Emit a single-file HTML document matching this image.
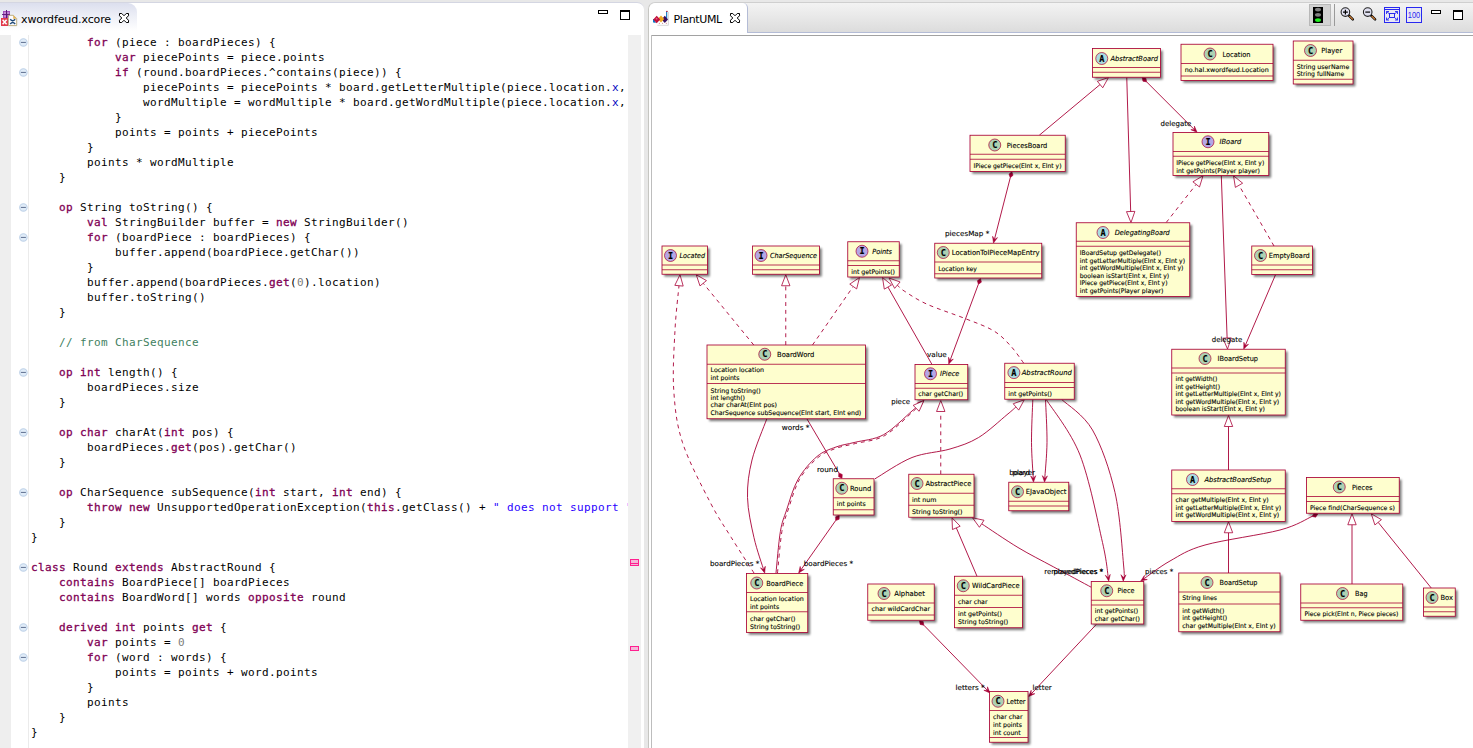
<!DOCTYPE html>
<html><head><meta charset="utf-8"><title>xwordfeud.xcore - PlantUML</title>
<style>
html,body{margin:0;padding:0}
body{width:1473px;height:748px;overflow:hidden;background:#e8e8e8;position:relative;font-family:"DejaVu Sans","Liberation Sans",sans-serif}
.abs{position:absolute}
#lp{left:0;top:2px;width:644px;height:746px;background:#fff;border-top:1px solid #d4d6e2;border-top-right-radius:7px;box-sizing:border-box;overflow:hidden}
#ltab{left:0;top:0;width:137px;height:31px;background:linear-gradient(#dcdfee 0%,#eceef6 40%,#fff 90%);border-top-right-radius:9px}
.tt{font-size:11px;color:#000;white-space:nowrap;line-height:14px}
#lruler{left:0;top:32px;width:11px;height:720px;background:#eeeeee}
#lline{left:28px;top:32px;width:1px;height:720px;background:#ebebeb}
#code{left:31px;top:31px;width:597px;height:720px;overflow:hidden;font-family:"DejaVu Sans Mono","Liberation Mono",monospace;font-size:11px;letter-spacing:0.378px;color:#000}
.ln{height:15px;line-height:15px;white-space:pre}
.k{color:#7f0055;-webkit-text-stroke:0.3px #7f0055}
.f{color:#0000c0}.s{color:#2a00ff}.c{color:#3f7f5f}.z{color:#7d7d7d}
.fm{position:absolute;left:19px;width:7px;height:7px;border:1px solid #b4c4d8;border-radius:50%;background:#f4f8fc;box-sizing:content-box}
.fm:after{content:"";position:absolute;left:1.5px;top:3px;width:4px;height:1px;background:#7890b0}
#oruler{left:628px;top:32px;width:13px;height:720px;background:#f0f0f0}
.pm{position:absolute;left:2px;width:7px;border:1px solid #ff2090;background:#f4b8d8}
.ico-min{width:8px;height:2px;border:1px solid #000;background:#fff}
.ico-max{width:8px;height:7px;border:1px solid #000;border-top-width:2px;background:#fff}
#rp{left:648px;top:2px;width:840px;height:746px;background:#fff;border-top:1px solid #cfcfcf;border-left:1px solid #c6c6c2;box-sizing:border-box;border-top-left-radius:7px;overflow:hidden}
#rbar{left:85px;top:0;width:780px;height:29px;background:linear-gradient(#f3f3f3 0%,#e9e9e9 45%,#dcdcdc 100%);border-left:1px solid #b4bcd6;border-bottom:1px solid #b4bcd6;border-top-left-radius:0}
#rtab{left:0;top:0;width:98px;height:30px;background:#fff;border-right:1px solid #b4bcd6;border-top-right-radius:5px;border-top-left-radius:7px}
#cvt{left:651px;top:35px;width:830px;height:1px;background:#a2a2a2}
#cvl{left:651px;top:35px;width:1px;height:720px;background:#bdbdbd}
svg.dg{position:absolute;left:0;top:0}
svg.ui{position:absolute;left:0;top:0;pointer-events:none}
</style></head>
<body>
<div id="lp" class="abs">
  <div id="ltab" class="abs"></div>
  <div id="lruler" class="abs"></div>
  <div id="lline" class="abs"></div>
  <div id="oruler" class="abs"><i class="pm" style="top:524px;height:5px"><b style="position:absolute;left:0;top:3px;width:7px;height:1px;background:#ff2090"></b></i><i class="pm" style="top:611px;height:3px"></i></div>
  <div class="abs ico-min" style="left:598px;top:7px"></div>
  <div class="abs ico-max" style="left:620px;top:7px"></div>
</div>
<div id="code" class="abs" style="top:35px">
<div class="ln" style="padding-left:56px"><span class="k">for</span> (piece : boardPieces) {</div>
<div class="ln" style="padding-left:84px"><span class="k">var</span> piecePoints = piece.points</div>
<div class="ln" style="padding-left:84px"><span class="k">if</span> (round.boardPieces.^contains(piece)) {</div>
<div class="ln" style="padding-left:112px">piecePoints = piecePoints * board.getLetterMultiple(piece.location.<span class="f">x</span>,</div>
<div class="ln" style="padding-left:112px">wordMultiple = wordMultiple * board.getWordMultiple(piece.location.<span class="f">x</span>,</div>
<div class="ln" style="padding-left:84px">}</div>
<div class="ln" style="padding-left:84px">points = points + piecePoints</div>
<div class="ln" style="padding-left:56px">}</div>
<div class="ln" style="padding-left:56px">points * wordMultiple</div>
<div class="ln" style="padding-left:28px">}</div>
<div class="ln" style="padding-left:0px">&nbsp;</div>
<div class="ln" style="padding-left:28px"><span class="k">op</span> String toString() {</div>
<div class="ln" style="padding-left:56px"><span class="k">val</span> StringBuilder buffer = <span class="k">new</span> StringBuilder()</div>
<div class="ln" style="padding-left:56px"><span class="k">for</span> (boardPiece : boardPieces) {</div>
<div class="ln" style="padding-left:84px">buffer.append(boardPiece.getChar())</div>
<div class="ln" style="padding-left:56px">}</div>
<div class="ln" style="padding-left:56px">buffer.append(boardPieces.<span class="k">get</span>(<span class="z">0</span>).location)</div>
<div class="ln" style="padding-left:56px">buffer.toString()</div>
<div class="ln" style="padding-left:28px">}</div>
<div class="ln" style="padding-left:0px">&nbsp;</div>
<div class="ln" style="padding-left:28px"><span class="c">// from CharSequence</span></div>
<div class="ln" style="padding-left:0px">&nbsp;</div>
<div class="ln" style="padding-left:28px"><span class="k">op</span> <span class="k">int</span> length() {</div>
<div class="ln" style="padding-left:56px">boardPieces.size</div>
<div class="ln" style="padding-left:28px">}</div>
<div class="ln" style="padding-left:0px">&nbsp;</div>
<div class="ln" style="padding-left:28px"><span class="k">op</span> <span class="k">char</span> charAt(<span class="k">int</span> pos) {</div>
<div class="ln" style="padding-left:56px">boardPieces.<span class="k">get</span>(pos).getChar()</div>
<div class="ln" style="padding-left:28px">}</div>
<div class="ln" style="padding-left:0px">&nbsp;</div>
<div class="ln" style="padding-left:28px"><span class="k">op</span> CharSequence subSequence(<span class="k">int</span> start, <span class="k">int</span> end) {</div>
<div class="ln" style="padding-left:56px"><span class="k">throw</span> <span class="k">new</span> UnsupportedOperationException(<span class="k">this</span>.getClass() + <span class="s">&quot; does not support &quot;</span> + this</div>
<div class="ln" style="padding-left:28px">}</div>
<div class="ln" style="padding-left:0px">}</div>
<div class="ln" style="padding-left:0px">&nbsp;</div>
<div class="ln" style="padding-left:0px"><span class="k">class</span> Round <span class="k">extends</span> AbstractRound {</div>
<div class="ln" style="padding-left:28px"><span class="k">contains</span> BoardPiece[] boardPieces</div>
<div class="ln" style="padding-left:28px"><span class="k">contains</span> BoardWord[] words <span class="k">opposite</span> round</div>
<div class="ln" style="padding-left:0px">&nbsp;</div>
<div class="ln" style="padding-left:28px"><span class="k">derived</span> <span class="k">int</span> points <span class="k">get</span> {</div>
<div class="ln" style="padding-left:56px"><span class="k">var</span> points = <span class="z">0</span></div>
<div class="ln" style="padding-left:56px"><span class="k">for</span> (word : words) {</div>
<div class="ln" style="padding-left:84px">points = points + word.points</div>
<div class="ln" style="padding-left:56px">}</div>
<div class="ln" style="padding-left:56px">points</div>
<div class="ln" style="padding-left:28px">}</div>
<div class="ln" style="padding-left:0px">}</div>
</div>
<svg class="ui" width="40" height="748" viewBox="0 0 40 748"><circle cx="23.4" cy="42.4" r="3.7" fill="#e0ecf8" stroke="#bfd2e8" stroke-width="1.1"/><rect x="20.9" y="41.9" width="5" height="1.1" fill="#6a7a98"/><circle cx="23.4" cy="72.4" r="3.7" fill="#e0ecf8" stroke="#bfd2e8" stroke-width="1.1"/><rect x="20.9" y="71.9" width="5" height="1.1" fill="#6a7a98"/><circle cx="23.4" cy="207.4" r="3.7" fill="#e0ecf8" stroke="#bfd2e8" stroke-width="1.1"/><rect x="20.9" y="206.9" width="5" height="1.1" fill="#6a7a98"/><circle cx="23.4" cy="237.4" r="3.7" fill="#e0ecf8" stroke="#bfd2e8" stroke-width="1.1"/><rect x="20.9" y="236.9" width="5" height="1.1" fill="#6a7a98"/><circle cx="23.4" cy="372.4" r="3.7" fill="#e0ecf8" stroke="#bfd2e8" stroke-width="1.1"/><rect x="20.9" y="371.9" width="5" height="1.1" fill="#6a7a98"/><circle cx="23.4" cy="432.4" r="3.7" fill="#e0ecf8" stroke="#bfd2e8" stroke-width="1.1"/><rect x="20.9" y="431.9" width="5" height="1.1" fill="#6a7a98"/><circle cx="23.4" cy="492.4" r="3.7" fill="#e0ecf8" stroke="#bfd2e8" stroke-width="1.1"/><rect x="20.9" y="491.9" width="5" height="1.1" fill="#6a7a98"/><circle cx="23.4" cy="567.4" r="3.7" fill="#e0ecf8" stroke="#bfd2e8" stroke-width="1.1"/><rect x="20.9" y="566.9" width="5" height="1.1" fill="#6a7a98"/><circle cx="23.4" cy="627.4" r="3.7" fill="#e0ecf8" stroke="#bfd2e8" stroke-width="1.1"/><rect x="20.9" y="626.9" width="5" height="1.1" fill="#6a7a98"/><circle cx="23.4" cy="657.4" r="3.7" fill="#e0ecf8" stroke="#bfd2e8" stroke-width="1.1"/><rect x="20.9" y="656.9" width="5" height="1.1" fill="#6a7a98"/></svg>
<div class="abs tt" id="lt" style="left:21px;top:12.5px;letter-spacing:-0.12px">xwordfeud.xcore</div>
<div id="rp" class="abs">
  <div id="rbar" class="abs"></div><div id="rtab" class="abs"></div>
</div>
<div class="abs tt" id="rt" style="left:673.5px;top:12.5px;letter-spacing:-0.39px">PlantUML</div>
<div class="abs ico-min" style="left:1431px;top:10px"></div>
<div class="abs ico-max" style="left:1453px;top:10px"></div>
<div id="cvt" class="abs"></div><div id="cvl" class="abs"></div>
<svg class="dg" width="1473" height="748" viewBox="0 0 1473 748">
<defs><filter id="sh" x="-20%" y="-20%" width="150%" height="150%"><feGaussianBlur stdDeviation="1.1"/></filter><clipPath id="cv"><rect x="652" y="36" width="821" height="712"/></clipPath></defs>
<g clip-path="url(#cv)">
<g><path d="M1039.25,135.25 L1100.05,84.55" fill="none" stroke="#A80036" stroke-width="0.9"/><polygon points="1108.5,77.5 1102.74,87.77 1097.36,81.32" fill="#fff" stroke="#A80036" stroke-width="0.8"/>
<path d="M1126.75,77.5 L1130.68,211.5" fill="none" stroke="#A80036" stroke-width="0.9"/><polygon points="1131,222.5 1126.48,211.63 1134.88,211.38" fill="#fff" stroke="#A80036" stroke-width="0.8"/>
<path d="M1146.63,81.88 L1195.59,130.84" fill="none" stroke="#A80036" stroke-width="0.9"/><polygon points="1197,132.25 1190.85,129.63 1194.59,129.84 1194.38,126.1" fill="#A80036" stroke="#A80036" stroke-width="0.6"/><polygon points="1142.25,77.5 1145.93,78.21 1146.63,81.88 1142.96,81.18" fill="#A80036" stroke="#A80036" stroke-width="0.6"/>
<path d="M1010.26,177.76 L994,241.06" fill="none" stroke="#A80036" stroke-width="0.9"/><polygon points="993.5,243 992.62,236.37 994.35,239.7 997.46,237.62" fill="#A80036" stroke="#A80036" stroke-width="0.6"/><polygon points="1011.8,171.75 1013.06,175.27 1010.26,177.76 1008.99,174.23" fill="#A80036" stroke="#A80036" stroke-width="0.6"/>
<path d="M1166.2,222.5 L1196.2,184.39" fill="none" stroke="#A80036" stroke-width="0.9" stroke-dasharray="3.9,3.9"/><polygon points="1203,175.75 1199.5,186.99 1192.9,181.8" fill="#fff" stroke="#A80036" stroke-width="0.8"/>
<path d="M1274,246 L1238.99,185.28" fill="none" stroke="#A80036" stroke-width="0.9" stroke-dasharray="3.9,3.9"/><polygon points="1233.5,175.75 1242.63,183.18 1235.36,187.38" fill="#fff" stroke="#A80036" stroke-width="0.8"/>
<path d="M1221.3,175.5 L1227.11,338.01" fill="none" stroke="#A80036" stroke-width="0.9"/><polygon points="1227.5,349 1222.91,338.16 1231.3,337.86" fill="#fff" stroke="#A80036" stroke-width="0.8"/>
<path d="M1275.5,274.75 L1244.54,347.16" fill="none" stroke="#A80036" stroke-width="0.9"/><polygon points="1243.75,349 1243.89,342.32 1245.09,345.86 1248.49,344.28" fill="#A80036" stroke="#A80036" stroke-width="0.6"/>
<path d="M754,573 C750.23,567.12 738.73,549.53 731.4,537.7 C724.07,525.87 718.15,517.87 710,502 C701.85,486.13 688.54,461.17 682.5,442.5 C676.46,423.83 675,408.75 673.75,390 C672.5,371.25 674.12,347.38 675,330 C675.88,312.62 678.34,293.09 679.01,285.71" fill="none" stroke="#A80036" stroke-width="0.9" stroke-dasharray="3.9,3.9"/><polygon points="680,274.75 683.19,286.08 674.83,285.33" fill="#fff" stroke="#A80036" stroke-width="0.8"/>
<path d="M753.75,345 L703.22,283.26" fill="none" stroke="#A80036" stroke-width="0.9" stroke-dasharray="3.9,3.9"/><polygon points="696.25,274.75 706.47,280.6 699.97,285.92" fill="#fff" stroke="#A80036" stroke-width="0.8"/>
<path d="M785.75,345 L785.75,285.75" fill="none" stroke="#A80036" stroke-width="0.9" stroke-dasharray="3.9,3.9"/><polygon points="785.75,274.75 789.95,285.75 781.55,285.75" fill="#fff" stroke="#A80036" stroke-width="0.8"/>
<path d="M812.5,345 L853.21,286.53" fill="none" stroke="#A80036" stroke-width="0.9" stroke-dasharray="3.9,3.9"/><polygon points="859.5,277.5 856.66,288.93 849.77,284.13" fill="#fff" stroke="#A80036" stroke-width="0.8"/>
<path d="M932,364.5 L887.94,287.06" fill="none" stroke="#A80036" stroke-width="0.9"/><polygon points="882.5,277.5 891.59,284.98 884.29,289.14" fill="#fff" stroke="#A80036" stroke-width="0.8"/>
<path d="M1023.6,363 C1021.45,360.17 1015.7,351.37 1010.7,346 C1005.7,340.63 1001.22,335.38 993.6,330.8 C985.98,326.22 976.1,322.93 965,318.5 C953.9,314.07 937.13,308.78 927,304.2 C916.87,299.62 909.14,294.18 904.2,291 C899.26,287.82 898.5,286.12 897.36,285.15" fill="none" stroke="#A80036" stroke-width="0.9" stroke-dasharray="3.9,3.9"/><polygon points="889,278 900.09,281.96 894.63,288.34" fill="#fff" stroke="#A80036" stroke-width="0.8"/>
<path d="M978.34,284.31 L949.45,362.13" fill="none" stroke="#A80036" stroke-width="0.9"/><polygon points="948.75,364 948.56,357.32 949.94,360.8 953.25,359.06" fill="#A80036" stroke="#A80036" stroke-width="0.6"/><polygon points="980.5,278.5 981.39,282.14 978.34,284.31 977.45,280.68" fill="#A80036" stroke="#A80036" stroke-width="0.6"/>
<path d="M766.75,419 C764.29,425.83 755.21,446.92 752,460 C748.79,473.08 747.17,484.55 747.5,497.5 C747.83,510.45 751.23,525.44 754,537.7 C756.77,549.96 762.43,565.52 764.12,571.09" fill="none" stroke="#A80036" stroke-width="0.9"/><polygon points="764.7,573 760.51,567.79 763.71,569.74 765.29,566.34" fill="#A80036" stroke="#A80036" stroke-width="0.6"/>
<path d="M807,419 L838.85,472.91" fill="none" stroke="#A80036" stroke-width="0.9"/><polygon points="842,478.25 838.62,476.65 838.85,472.91 842.23,474.51" fill="#A80036" stroke="#A80036" stroke-width="0.6"/>
<path d="M835.63,520.57 L799.85,571.36" fill="none" stroke="#A80036" stroke-width="0.9"/><polygon points="798.7,573 800.23,566.49 800.66,570.21 804.31,569.37" fill="#A80036" stroke="#A80036" stroke-width="0.6"/><polygon points="839.2,515.5 839.13,519.24 835.63,520.57 835.7,516.83" fill="#A80036" stroke="#A80036" stroke-width="0.6"/>
<path d="M776,573 C776.73,566.07 778.63,541.9 780.4,531.4 C782.17,520.9 783.67,518.67 786.6,510 C789.53,501.33 792.93,488.32 798,479.4 C803.07,470.48 810.67,461.9 817,456.5 C823.33,451.1 829.67,449.37 836,447 C842.33,444.63 847.07,444.35 855,442.3 C862.93,440.25 874.1,439.92 883.6,434.7 C893.1,429.48 905.53,416.48 912,411 C918.47,405.52 920.67,403.35 922.4,401.82" fill="none" stroke="#A80036" stroke-width="0.9"/><polygon points="923.9,400.5 920.91,406.48 921.34,402.76 917.6,402.73" fill="#A80036" stroke="#A80036" stroke-width="0.6"/>
<path d="M777.5,573 C778.23,566.07 780.13,541.9 781.9,531.4 C783.67,520.9 785.17,518.67 788.1,510 C791.03,501.33 794.52,488.15 799.5,479.4 C804.48,470.65 811.83,462.7 818,457.5 C824.17,452.3 830.25,450.53 836.5,448.2 C842.75,445.87 847.55,445.55 855.5,443.5 C863.45,441.45 874.7,441.15 884.2,435.9 C893.7,430.65 907.17,416.6 912.5,412 C917.83,407.4 915.55,408.93 916.16,408.31" fill="none" stroke="#A80036" stroke-width="0.9" stroke-dasharray="3.9,3.9"/><polygon points="923.9,400.5 919.14,411.27 913.17,405.36" fill="#fff" stroke="#A80036" stroke-width="0.8"/>
<path d="M940.75,474.25 L940.75,411.5" fill="none" stroke="#A80036" stroke-width="0.9" stroke-dasharray="3.9,3.9"/><polygon points="940.75,400.5 944.95,411.5 936.55,411.5" fill="#fff" stroke="#A80036" stroke-width="0.8"/>
<path d="M875,478.8 C881.17,475.25 899.5,462.47 912,457.5 C924.5,452.53 938.9,452.33 950,449 C961.1,445.67 969.1,443.22 978.6,437.5 C988.1,431.78 1000.77,419.79 1007,414.7 C1013.23,409.61 1014.48,408.24 1015.98,406.94" fill="none" stroke="#A80036" stroke-width="0.9"/><polygon points="1024.3,399.75 1018.72,410.12 1013.23,403.76" fill="#fff" stroke="#A80036" stroke-width="0.8"/>
<path d="M1032.8,399.5 C1032.58,406.67 1031.4,429.08 1031.5,442.5 C1031.6,455.92 1033.08,473.75 1033.4,480" fill="none" stroke="#A80036" stroke-width="0.9"/><polygon points="1033.5,482 1030.69,475.93 1033.33,478.59 1035.68,475.68" fill="#A80036" stroke="#A80036" stroke-width="0.6"/>
<path d="M1045.5,399.5 C1045.75,406.67 1047.15,429.08 1047,442.5 C1046.85,455.92 1045.02,473.75 1044.63,480" fill="none" stroke="#A80036" stroke-width="0.9"/><polygon points="1044.5,482 1042.4,475.65 1044.72,478.6 1047.39,475.97" fill="#A80036" stroke="#A80036" stroke-width="0.6"/>
<path d="M1046.25,399.5 C1051.88,408.75 1070.62,431.17 1080,455 C1089.38,478.83 1097.76,521.83 1102.5,542.5 C1107.24,563.17 1107.44,572.94 1108.43,579.03" fill="none" stroke="#A80036" stroke-width="0.9"/><polygon points="1108.75,581 1105.29,575.28 1108.2,577.63 1110.22,574.48" fill="#A80036" stroke="#A80036" stroke-width="0.6"/>
<path d="M1061.75,399.5 C1066.88,404.58 1083.62,414.5 1092.5,430 C1101.38,445.5 1109.79,469.67 1115,492.5 C1120.21,515.33 1122.36,552.58 1123.75,567 C1125.14,581.42 1123.39,577 1123.32,579" fill="none" stroke="#A80036" stroke-width="0.9"/><polygon points="1123.25,581 1120.97,574.71 1123.37,577.59 1125.97,574.89" fill="#A80036" stroke="#A80036" stroke-width="0.6"/>
<path d="M977,576.25 L956.32,527.87" fill="none" stroke="#A80036" stroke-width="0.9"/><polygon points="952,517.75 960.18,526.21 952.46,529.52" fill="#fff" stroke="#A80036" stroke-width="0.8"/>
<path d="M1091.25,587.25 C1085,583.88 1065.96,573.62 1053.75,567 C1041.54,560.38 1030.01,554.71 1018,547.5 C1005.99,540.29 987.76,527.72 981.71,523.77" fill="none" stroke="#A80036" stroke-width="0.9"/><polygon points="972.5,517.75 984.01,520.25 979.41,527.29" fill="#fff" stroke="#A80036" stroke-width="0.8"/>
<path d="M1228.5,470 L1228.5,426.5" fill="none" stroke="#A80036" stroke-width="0.9"/><polygon points="1228.5,415.5 1232.7,426.5 1224.3,426.5" fill="#fff" stroke="#A80036" stroke-width="0.8"/>
<path d="M1228.5,573 L1228.5,532.75" fill="none" stroke="#A80036" stroke-width="0.9"/><polygon points="1228.5,521.75 1232.7,532.75 1224.3,532.75" fill="#fff" stroke="#A80036" stroke-width="0.8"/>
<path d="M1312.04,516.42 C1306.7,518.68 1297.84,525.24 1280,530 C1262.16,534.76 1223.33,539.83 1205,545 C1186.67,550.17 1180.43,555.19 1170,561 C1159.57,566.81 1147,576.73 1142.4,579.87" fill="none" stroke="#A80036" stroke-width="0.9"/><polygon points="1140.75,581 1144.46,575.44 1143.56,579.08 1147.28,579.56" fill="#A80036" stroke="#A80036" stroke-width="0.6"/><polygon points="1317.75,514 1315.72,517.14 1312.04,516.42 1314.08,513.28" fill="#A80036" stroke="#A80036" stroke-width="0.6"/>
<path d="M1352,584 L1352,524.75" fill="none" stroke="#A80036" stroke-width="0.9"/><polygon points="1352,513.75 1356.2,524.75 1347.8,524.75" fill="#fff" stroke="#A80036" stroke-width="0.8"/>
<path d="M1431.25,588 L1378.16,522.31" fill="none" stroke="#A80036" stroke-width="0.9"/><polygon points="1371.25,513.75 1381.43,519.67 1374.9,524.95" fill="#fff" stroke="#A80036" stroke-width="0.8"/>
<path d="M923.83,625.19 L988.6,691.57" fill="none" stroke="#A80036" stroke-width="0.9"/><polygon points="990,693 983.88,690.31 987.62,690.56 987.46,686.82" fill="#A80036" stroke="#A80036" stroke-width="0.6"/><polygon points="919.5,620.75 923.17,621.5 923.83,625.19 920.16,624.44" fill="#A80036" stroke="#A80036" stroke-width="0.6"/>
<path d="M1096.25,624.5 L1030.12,695.04" fill="none" stroke="#A80036" stroke-width="0.9"/><polygon points="1028.75,696.5 1031.17,690.27 1031.08,694.01 1034.81,693.69" fill="#A80036" stroke="#A80036" stroke-width="0.6"/></g>
<g font-family="'DejaVu Sans','Liberation Sans',sans-serif" fill="#000" stroke="#000" stroke-width="0.12"><rect x="1094.8" y="50.8" width="68" height="28.75" fill="#000" opacity="0.5" filter="url(#sh)"/>
<rect x="1092.5" y="48.5" width="68" height="28.75" fill="#FEFECE" stroke="#A80036" stroke-width="0.85"/>
<line x1="1092.5" y1="67.5" x2="1160.5" y2="67.5" stroke="#A80036" stroke-width="0.8"/>
<line x1="1092.5" y1="72.25" x2="1160.5" y2="72.25" stroke="#A80036" stroke-width="0.8"/>
<circle cx="1101.75" cy="58.5" r="6.0" fill="#A9DCDF" stroke="#A80036" stroke-width="0.7"/>
<text x="1101.75" y="61.6" font-size="8.6" font-weight="bold" text-anchor="middle" font-family="'DejaVu Sans Mono','Liberation Mono',monospace" fill="#000">A</text>
<text x="1110.5" y="61.1" font-size="7.0" textLength="47.5" lengthAdjust="spacingAndGlyphs" font-style="italic">AbstractBoard</text>
<rect x="1183.3" y="46.55" width="92" height="36.25" fill="#000" opacity="0.5" filter="url(#sh)"/>
<rect x="1181" y="44.25" width="92" height="36.25" fill="#FEFECE" stroke="#A80036" stroke-width="0.85"/>
<line x1="1181" y1="63.5" x2="1273" y2="63.5" stroke="#A80036" stroke-width="0.8"/>
<line x1="1181" y1="76" x2="1273" y2="76" stroke="#A80036" stroke-width="0.8"/>
<circle cx="1210" cy="54" r="6.0" fill="#ADD1B2" stroke="#A80036" stroke-width="0.7"/>
<text x="1210" y="57.1" font-size="8.6" font-weight="bold" text-anchor="middle" font-family="'DejaVu Sans Mono','Liberation Mono',monospace" fill="#000">C</text>
<text x="1222.5" y="56.6" font-size="7.0" textLength="28" lengthAdjust="spacingAndGlyphs">Location</text>
<text x="1184.75" y="71.75" font-size="6.3" textLength="84" lengthAdjust="spacingAndGlyphs">no.hal.xwordfeud.Location</text>
<rect x="1295.55" y="43.3" width="59.75" height="43" fill="#000" opacity="0.5" filter="url(#sh)"/>
<rect x="1293.25" y="41" width="59.75" height="43" fill="#FEFECE" stroke="#A80036" stroke-width="0.85"/>
<line x1="1293.25" y1="60.25" x2="1353" y2="60.25" stroke="#A80036" stroke-width="0.8"/>
<line x1="1293.25" y1="79.25" x2="1353" y2="79.25" stroke="#A80036" stroke-width="0.8"/>
<circle cx="1310.5" cy="50.5" r="6.0" fill="#ADD1B2" stroke="#A80036" stroke-width="0.7"/>
<text x="1310.5" y="53.6" font-size="8.6" font-weight="bold" text-anchor="middle" font-family="'DejaVu Sans Mono','Liberation Mono',monospace" fill="#000">C</text>
<text x="1321.25" y="53.1" font-size="7.0" textLength="21" lengthAdjust="spacingAndGlyphs">Player</text>
<text x="1296.75" y="68.5" font-size="6.3" textLength="52.5" lengthAdjust="spacingAndGlyphs">String userName</text>
<text x="1296.75" y="76.25" font-size="6.3" textLength="47.5" lengthAdjust="spacingAndGlyphs">String fullName</text>
<rect x="972.3" y="137.55" width="95.25" height="36.25" fill="#000" opacity="0.5" filter="url(#sh)"/>
<rect x="970" y="135.25" width="95.25" height="36.25" fill="#FEFECE" stroke="#A80036" stroke-width="0.85"/>
<line x1="970" y1="154.25" x2="1065.25" y2="154.25" stroke="#A80036" stroke-width="0.8"/>
<line x1="970" y1="159.25" x2="1065.25" y2="159.25" stroke="#A80036" stroke-width="0.8"/>
<circle cx="994.75" cy="145" r="6.0" fill="#ADD1B2" stroke="#A80036" stroke-width="0.7"/>
<text x="994.75" y="148.1" font-size="8.6" font-weight="bold" text-anchor="middle" font-family="'DejaVu Sans Mono','Liberation Mono',monospace" fill="#000">C</text>
<text x="1006.75" y="147.6" font-size="7.0" textLength="40.5" lengthAdjust="spacingAndGlyphs">PiecesBoard</text>
<text x="973.5" y="167.75" font-size="6.3" textLength="88" lengthAdjust="spacingAndGlyphs">IPiece getPiece(EInt x, EInt y)</text>
<rect x="1175.3" y="134.8" width="95.75" height="43" fill="#000" opacity="0.5" filter="url(#sh)"/>
<rect x="1173" y="132.5" width="95.75" height="43" fill="#FEFECE" stroke="#A80036" stroke-width="0.85"/>
<line x1="1173" y1="151.5" x2="1268.75" y2="151.5" stroke="#A80036" stroke-width="0.8"/>
<line x1="1173" y1="156.25" x2="1268.75" y2="156.25" stroke="#A80036" stroke-width="0.8"/>
<circle cx="1208" cy="141.75" r="6.0" fill="#B4A7E5" stroke="#A80036" stroke-width="0.7"/>
<text x="1208" y="144.85" font-size="8.6" font-weight="bold" text-anchor="middle" font-family="'DejaVu Sans Mono','Liberation Mono',monospace" fill="#000">I</text>
<text x="1219.5" y="144.35" font-size="7.0" textLength="21.75" lengthAdjust="spacingAndGlyphs" font-style="italic">IBoard</text>
<text x="1176.25" y="164.75" font-size="6.3" textLength="88" lengthAdjust="spacingAndGlyphs">IPiece getPiece(EInt x, EInt y)</text>
<text x="1176.25" y="172.5" font-size="6.3" textLength="83.75" lengthAdjust="spacingAndGlyphs">int getPoints(Player player)</text>
<rect x="1078.55" y="225.05" width="113.5" height="73.75" fill="#000" opacity="0.5" filter="url(#sh)"/>
<rect x="1076.25" y="222.75" width="113.5" height="73.75" fill="#FEFECE" stroke="#A80036" stroke-width="0.85"/>
<line x1="1076.25" y1="241.25" x2="1189.75" y2="241.25" stroke="#A80036" stroke-width="0.8"/>
<line x1="1076.25" y1="246.25" x2="1189.75" y2="246.25" stroke="#A80036" stroke-width="0.8"/>
<circle cx="1103" cy="232.5" r="6.0" fill="#A9DCDF" stroke="#A80036" stroke-width="0.7"/>
<text x="1103" y="235.6" font-size="8.6" font-weight="bold" text-anchor="middle" font-family="'DejaVu Sans Mono','Liberation Mono',monospace" fill="#000">A</text>
<text x="1114.75" y="235.1" font-size="7.0" textLength="55" lengthAdjust="spacingAndGlyphs" font-style="italic">DelegatingBoard</text>
<text x="1079.75" y="255" font-size="6.3" textLength="81.25" lengthAdjust="spacingAndGlyphs">IBoardSetup getDelegate()</text>
<text x="1079.75" y="262.5" font-size="6.3" textLength="105.25" lengthAdjust="spacingAndGlyphs">int getLetterMultiple(EInt x, EInt y)</text>
<text x="1079.75" y="270" font-size="6.3" textLength="103.75" lengthAdjust="spacingAndGlyphs">int getWordMultiple(EInt x, EInt y)</text>
<text x="1079.75" y="277.75" font-size="6.3" textLength="89.5" lengthAdjust="spacingAndGlyphs">boolean isStart(EInt x, EInt y)</text>
<text x="1079.75" y="285" font-size="6.3" textLength="87.75" lengthAdjust="spacingAndGlyphs">IPiece getPiece(EInt x, EInt y)</text>
<text x="1079.75" y="292.75" font-size="6.3" textLength="83.75" lengthAdjust="spacingAndGlyphs">int getPoints(Player player)</text>
<rect x="664.3" y="248.3" width="45.5" height="28.25" fill="#000" opacity="0.5" filter="url(#sh)"/>
<rect x="662" y="246" width="45.5" height="28.25" fill="#FEFECE" stroke="#A80036" stroke-width="0.85"/>
<line x1="662" y1="265" x2="707.5" y2="265" stroke="#A80036" stroke-width="0.8"/>
<line x1="662" y1="269.75" x2="707.5" y2="269.75" stroke="#A80036" stroke-width="0.8"/>
<circle cx="670.5" cy="255.5" r="6.0" fill="#B4A7E5" stroke="#A80036" stroke-width="0.7"/>
<text x="670.5" y="258.6" font-size="8.6" font-weight="bold" text-anchor="middle" font-family="'DejaVu Sans Mono','Liberation Mono',monospace" fill="#000">I</text>
<text x="679.5" y="258.1" font-size="7.0" textLength="25.5" lengthAdjust="spacingAndGlyphs" font-style="italic">Located</text>
<rect x="754.8" y="248.3" width="67" height="28.25" fill="#000" opacity="0.5" filter="url(#sh)"/>
<rect x="752.5" y="246" width="67" height="28.25" fill="#FEFECE" stroke="#A80036" stroke-width="0.85"/>
<line x1="752.5" y1="265" x2="819.5" y2="265" stroke="#A80036" stroke-width="0.8"/>
<line x1="752.5" y1="269.75" x2="819.5" y2="269.75" stroke="#A80036" stroke-width="0.8"/>
<circle cx="761" cy="255.5" r="6.0" fill="#B4A7E5" stroke="#A80036" stroke-width="0.7"/>
<text x="761" y="258.6" font-size="8.6" font-weight="bold" text-anchor="middle" font-family="'DejaVu Sans Mono','Liberation Mono',monospace" fill="#000">I</text>
<text x="770" y="258.1" font-size="7.0" textLength="47" lengthAdjust="spacingAndGlyphs" font-style="italic">CharSequence</text>
<rect x="850.05" y="244.05" width="51.5" height="35.25" fill="#000" opacity="0.5" filter="url(#sh)"/>
<rect x="847.75" y="241.75" width="51.5" height="35.25" fill="#FEFECE" stroke="#A80036" stroke-width="0.85"/>
<line x1="847.75" y1="260.75" x2="899.25" y2="260.75" stroke="#A80036" stroke-width="0.8"/>
<line x1="847.75" y1="265.5" x2="899.25" y2="265.5" stroke="#A80036" stroke-width="0.8"/>
<circle cx="862" cy="251.25" r="6.0" fill="#B4A7E5" stroke="#A80036" stroke-width="0.7"/>
<text x="862" y="254.35" font-size="8.6" font-weight="bold" text-anchor="middle" font-family="'DejaVu Sans Mono','Liberation Mono',monospace" fill="#000">I</text>
<text x="872.25" y="253.85" font-size="7.0" textLength="19.75" lengthAdjust="spacingAndGlyphs" font-style="italic">Points</text>
<text x="851.25" y="273.5" font-size="6.3" textLength="43.75" lengthAdjust="spacingAndGlyphs">int getPoints()</text>
<rect x="937.05" y="245.55" width="107" height="34.75" fill="#000" opacity="0.5" filter="url(#sh)"/>
<rect x="934.75" y="243.25" width="107" height="34.75" fill="#FEFECE" stroke="#A80036" stroke-width="0.85"/>
<line x1="934.75" y1="262" x2="1041.75" y2="262" stroke="#A80036" stroke-width="0.8"/>
<line x1="934.75" y1="273.75" x2="1041.75" y2="273.75" stroke="#A80036" stroke-width="0.8"/>
<circle cx="943.25" cy="252.5" r="6.0" fill="#ADD1B2" stroke="#A80036" stroke-width="0.7"/>
<text x="943.25" y="255.6" font-size="8.6" font-weight="bold" text-anchor="middle" font-family="'DejaVu Sans Mono','Liberation Mono',monospace" fill="#000">C</text>
<text x="951.75" y="255.1" font-size="7.0" textLength="87.75" lengthAdjust="spacingAndGlyphs">LocationToIPieceMapEntry</text>
<text x="938.25" y="270.5" font-size="6.3" textLength="38.75" lengthAdjust="spacingAndGlyphs">Location key</text>
<rect x="1254.05" y="248.3" width="60.75" height="28.5" fill="#000" opacity="0.5" filter="url(#sh)"/>
<rect x="1251.75" y="246" width="60.75" height="28.5" fill="#FEFECE" stroke="#A80036" stroke-width="0.85"/>
<line x1="1251.75" y1="265" x2="1312.5" y2="265" stroke="#A80036" stroke-width="0.8"/>
<line x1="1251.75" y1="269.75" x2="1312.5" y2="269.75" stroke="#A80036" stroke-width="0.8"/>
<circle cx="1260.5" cy="255.5" r="6.0" fill="#ADD1B2" stroke="#A80036" stroke-width="0.7"/>
<text x="1260.5" y="258.6" font-size="8.6" font-weight="bold" text-anchor="middle" font-family="'DejaVu Sans Mono','Liberation Mono',monospace" fill="#000">C</text>
<text x="1268.75" y="258.1" font-size="7.0" textLength="41" lengthAdjust="spacingAndGlyphs">EmptyBoard</text>
<rect x="709.3" y="347.3" width="158.5" height="73.75" fill="#000" opacity="0.5" filter="url(#sh)"/>
<rect x="707" y="345" width="158.5" height="73.75" fill="#FEFECE" stroke="#A80036" stroke-width="0.85"/>
<line x1="707" y1="364.25" x2="865.5" y2="364.25" stroke="#A80036" stroke-width="0.8"/>
<line x1="707" y1="383.5" x2="865.5" y2="383.5" stroke="#A80036" stroke-width="0.8"/>
<circle cx="764.75" cy="354.25" r="6.0" fill="#ADD1B2" stroke="#A80036" stroke-width="0.7"/>
<text x="764.75" y="357.35" font-size="8.6" font-weight="bold" text-anchor="middle" font-family="'DejaVu Sans Mono','Liberation Mono',monospace" fill="#000">C</text>
<text x="777" y="356.85" font-size="7.0" textLength="37.25" lengthAdjust="spacingAndGlyphs">BoardWord</text>
<text x="710.5" y="372.25" font-size="6.3" textLength="53.5" lengthAdjust="spacingAndGlyphs">Location location</text>
<text x="710.5" y="380" font-size="6.3" textLength="29" lengthAdjust="spacingAndGlyphs">int points</text>
<text x="710.5" y="392.5" font-size="6.3" textLength="50.25" lengthAdjust="spacingAndGlyphs">String toString()</text>
<text x="710.5" y="399.75" font-size="6.3" textLength="34.5" lengthAdjust="spacingAndGlyphs">int length()</text>
<text x="710.5" y="407" font-size="6.3" textLength="66.5" lengthAdjust="spacingAndGlyphs">char charAt(EInt pos)</text>
<text x="710.5" y="414.5" font-size="6.3" textLength="150.75" lengthAdjust="spacingAndGlyphs">CharSequence subSequence(EInt start, EInt end)</text>
<rect x="917.3" y="366.8" width="52.75" height="35.25" fill="#000" opacity="0.5" filter="url(#sh)"/>
<rect x="915" y="364.5" width="52.75" height="35.25" fill="#FEFECE" stroke="#A80036" stroke-width="0.85"/>
<line x1="915" y1="383.5" x2="967.75" y2="383.5" stroke="#A80036" stroke-width="0.8"/>
<line x1="915" y1="388.25" x2="967.75" y2="388.25" stroke="#A80036" stroke-width="0.8"/>
<circle cx="930.5" cy="373.75" r="6.0" fill="#B4A7E5" stroke="#A80036" stroke-width="0.7"/>
<text x="930.5" y="376.85" font-size="8.6" font-weight="bold" text-anchor="middle" font-family="'DejaVu Sans Mono','Liberation Mono',monospace" fill="#000">I</text>
<text x="940" y="376.35" font-size="7.0" textLength="19.25" lengthAdjust="spacingAndGlyphs" font-style="italic">IPiece</text>
<text x="918.25" y="396.25" font-size="6.3" textLength="45" lengthAdjust="spacingAndGlyphs">char getChar()</text>
<rect x="1007.05" y="365.55" width="69.5" height="36" fill="#000" opacity="0.5" filter="url(#sh)"/>
<rect x="1004.75" y="363.25" width="69.5" height="36" fill="#FEFECE" stroke="#A80036" stroke-width="0.85"/>
<line x1="1004.75" y1="382.5" x2="1074.25" y2="382.5" stroke="#A80036" stroke-width="0.8"/>
<line x1="1004.75" y1="387.5" x2="1074.25" y2="387.5" stroke="#A80036" stroke-width="0.8"/>
<circle cx="1013.9" cy="372.6" r="6.0" fill="#A9DCDF" stroke="#A80036" stroke-width="0.7"/>
<text x="1013.9" y="375.7" font-size="8.6" font-weight="bold" text-anchor="middle" font-family="'DejaVu Sans Mono','Liberation Mono',monospace" fill="#000">A</text>
<text x="1021.75" y="375.2" font-size="7.0" textLength="50" lengthAdjust="spacingAndGlyphs" font-style="italic">AbstractRound</text>
<text x="1008.25" y="395.5" font-size="6.3" textLength="43.75" lengthAdjust="spacingAndGlyphs">int getPoints()</text>
<rect x="1174.05" y="351.55" width="113.5" height="65.75" fill="#000" opacity="0.5" filter="url(#sh)"/>
<rect x="1171.75" y="349.25" width="113.5" height="65.75" fill="#FEFECE" stroke="#A80036" stroke-width="0.85"/>
<line x1="1171.75" y1="368" x2="1285.25" y2="368" stroke="#A80036" stroke-width="0.8"/>
<line x1="1171.75" y1="373" x2="1285.25" y2="373" stroke="#A80036" stroke-width="0.8"/>
<circle cx="1205" cy="358.5" r="6.0" fill="#ADD1B2" stroke="#A80036" stroke-width="0.7"/>
<text x="1205" y="361.6" font-size="8.6" font-weight="bold" text-anchor="middle" font-family="'DejaVu Sans Mono','Liberation Mono',monospace" fill="#000">C</text>
<text x="1217.5" y="361.1" font-size="7.0" textLength="40.5" lengthAdjust="spacingAndGlyphs">IBoardSetup</text>
<text x="1175.5" y="381" font-size="6.3" textLength="41.75" lengthAdjust="spacingAndGlyphs">int getWidth()</text>
<text x="1175.5" y="388.5" font-size="6.3" textLength="44.5" lengthAdjust="spacingAndGlyphs">int getHeight()</text>
<text x="1175.5" y="396.25" font-size="6.3" textLength="105.5" lengthAdjust="spacingAndGlyphs">int getLetterMultiple(EInt x, EInt y)</text>
<text x="1175.5" y="403.75" font-size="6.3" textLength="103.75" lengthAdjust="spacingAndGlyphs">int getWordMultiple(EInt x, EInt y)</text>
<text x="1175.5" y="411.25" font-size="6.3" textLength="89.5" lengthAdjust="spacingAndGlyphs">boolean isStart(EInt x, EInt y)</text>
<rect x="835.55" y="481.05" width="40.75" height="36.25" fill="#000" opacity="0.5" filter="url(#sh)"/>
<rect x="833.25" y="478.75" width="40.75" height="36.25" fill="#FEFECE" stroke="#A80036" stroke-width="0.85"/>
<line x1="833.25" y1="497.75" x2="874" y2="497.75" stroke="#A80036" stroke-width="0.8"/>
<line x1="833.25" y1="509.75" x2="874" y2="509.75" stroke="#A80036" stroke-width="0.8"/>
<circle cx="841.75" cy="488.25" r="6.0" fill="#ADD1B2" stroke="#A80036" stroke-width="0.7"/>
<text x="841.75" y="491.35" font-size="8.6" font-weight="bold" text-anchor="middle" font-family="'DejaVu Sans Mono','Liberation Mono',monospace" fill="#000">C</text>
<text x="850" y="490.85" font-size="7.0" textLength="21.25" lengthAdjust="spacingAndGlyphs">Round</text>
<text x="836.75" y="506.25" font-size="6.3" textLength="29" lengthAdjust="spacingAndGlyphs">int points</text>
<rect x="911.05" y="476.55" width="65.25" height="43" fill="#000" opacity="0.5" filter="url(#sh)"/>
<rect x="908.75" y="474.25" width="65.25" height="43" fill="#FEFECE" stroke="#A80036" stroke-width="0.85"/>
<line x1="908.75" y1="493.25" x2="974" y2="493.25" stroke="#A80036" stroke-width="0.8"/>
<line x1="908.75" y1="505.25" x2="974" y2="505.25" stroke="#A80036" stroke-width="0.8"/>
<circle cx="917" cy="483.5" r="6.0" fill="#ADD1B2" stroke="#A80036" stroke-width="0.7"/>
<text x="917" y="486.6" font-size="8.6" font-weight="bold" text-anchor="middle" font-family="'DejaVu Sans Mono','Liberation Mono',monospace" fill="#000">C</text>
<text x="925.5" y="486.1" font-size="7.0" textLength="45.75" lengthAdjust="spacingAndGlyphs">AbstractPiece</text>
<text x="912" y="501.5" font-size="6.3" textLength="24.25" lengthAdjust="spacingAndGlyphs">int num</text>
<text x="912" y="513.75" font-size="6.3" textLength="50.5" lengthAdjust="spacingAndGlyphs">String toString()</text>
<rect x="1011.05" y="484.55" width="60" height="28.5" fill="#000" opacity="0.5" filter="url(#sh)"/>
<rect x="1008.75" y="482.25" width="60" height="28.5" fill="#FEFECE" stroke="#A80036" stroke-width="0.85"/>
<line x1="1008.75" y1="501.25" x2="1068.75" y2="501.25" stroke="#A80036" stroke-width="0.8"/>
<line x1="1008.75" y1="506" x2="1068.75" y2="506" stroke="#A80036" stroke-width="0.8"/>
<circle cx="1017.5" cy="491.75" r="6.0" fill="#ADD1B2" stroke="#A80036" stroke-width="0.7"/>
<text x="1017.5" y="494.85" font-size="8.6" font-weight="bold" text-anchor="middle" font-family="'DejaVu Sans Mono','Liberation Mono',monospace" fill="#000">C</text>
<text x="1025.75" y="494.35" font-size="7.0" textLength="40.75" lengthAdjust="spacingAndGlyphs">EJavaObject</text>
<rect x="1174.05" y="472.3" width="113.5" height="51.5" fill="#000" opacity="0.5" filter="url(#sh)"/>
<rect x="1171.75" y="470" width="113.5" height="51.5" fill="#FEFECE" stroke="#A80036" stroke-width="0.85"/>
<line x1="1171.75" y1="488.75" x2="1285.25" y2="488.75" stroke="#A80036" stroke-width="0.8"/>
<line x1="1171.75" y1="493.75" x2="1285.25" y2="493.75" stroke="#A80036" stroke-width="0.8"/>
<circle cx="1192.5" cy="479.5" r="6.0" fill="#A9DCDF" stroke="#A80036" stroke-width="0.7"/>
<text x="1192.5" y="482.6" font-size="8.6" font-weight="bold" text-anchor="middle" font-family="'DejaVu Sans Mono','Liberation Mono',monospace" fill="#000">A</text>
<text x="1204.5" y="482.1" font-size="7.0" textLength="66.75" lengthAdjust="spacingAndGlyphs" font-style="italic">AbstractBoardSetup</text>
<text x="1175.5" y="501.75" font-size="6.3" textLength="93.25" lengthAdjust="spacingAndGlyphs">char getMultiple(EInt x, EInt y)</text>
<text x="1175.5" y="509.5" font-size="6.3" textLength="105.75" lengthAdjust="spacingAndGlyphs">int getLetterMultiple(EInt x, EInt y)</text>
<text x="1175.5" y="517.25" font-size="6.3" textLength="103.75" lengthAdjust="spacingAndGlyphs">int getWordMultiple(EInt x, EInt y)</text>
<rect x="1308.8" y="479.8" width="92.75" height="35.75" fill="#000" opacity="0.5" filter="url(#sh)"/>
<rect x="1306.5" y="477.5" width="92.75" height="35.75" fill="#FEFECE" stroke="#A80036" stroke-width="0.85"/>
<line x1="1306.5" y1="496.5" x2="1399.25" y2="496.5" stroke="#A80036" stroke-width="0.8"/>
<line x1="1306.5" y1="501.5" x2="1399.25" y2="501.5" stroke="#A80036" stroke-width="0.8"/>
<circle cx="1339.25" cy="487" r="6.0" fill="#ADD1B2" stroke="#A80036" stroke-width="0.7"/>
<text x="1339.25" y="490.1" font-size="8.6" font-weight="bold" text-anchor="middle" font-family="'DejaVu Sans Mono','Liberation Mono',monospace" fill="#000">C</text>
<text x="1352" y="489.6" font-size="7.0" textLength="20.5" lengthAdjust="spacingAndGlyphs">Pieces</text>
<text x="1310" y="509.5" font-size="6.3" textLength="85" lengthAdjust="spacingAndGlyphs">Piece find(CharSequence s)</text>
<rect x="748.8" y="575.8" width="61.25" height="59" fill="#000" opacity="0.5" filter="url(#sh)"/>
<rect x="746.5" y="573.5" width="61.25" height="59" fill="#FEFECE" stroke="#A80036" stroke-width="0.85"/>
<line x1="746.5" y1="592.5" x2="807.75" y2="592.5" stroke="#A80036" stroke-width="0.8"/>
<line x1="746.5" y1="611.75" x2="807.75" y2="611.75" stroke="#A80036" stroke-width="0.8"/>
<circle cx="756.75" cy="583" r="6.0" fill="#ADD1B2" stroke="#A80036" stroke-width="0.7"/>
<text x="756.75" y="586.1" font-size="8.6" font-weight="bold" text-anchor="middle" font-family="'DejaVu Sans Mono','Liberation Mono',monospace" fill="#000">C</text>
<text x="766.25" y="585.6" font-size="7.0" textLength="37" lengthAdjust="spacingAndGlyphs">BoardPiece</text>
<text x="750" y="600.75" font-size="6.3" textLength="53.75" lengthAdjust="spacingAndGlyphs">Location location</text>
<text x="750" y="608.5" font-size="6.3" textLength="29.25" lengthAdjust="spacingAndGlyphs">int points</text>
<text x="750" y="621" font-size="6.3" textLength="45.5" lengthAdjust="spacingAndGlyphs">char getChar()</text>
<text x="750" y="628.5" font-size="6.3" textLength="50.25" lengthAdjust="spacingAndGlyphs">String toString()</text>
<rect x="870.05" y="586.3" width="66.5" height="36.25" fill="#000" opacity="0.5" filter="url(#sh)"/>
<rect x="867.75" y="584" width="66.5" height="36.25" fill="#FEFECE" stroke="#A80036" stroke-width="0.85"/>
<line x1="867.75" y1="603" x2="934.25" y2="603" stroke="#A80036" stroke-width="0.8"/>
<line x1="867.75" y1="615" x2="934.25" y2="615" stroke="#A80036" stroke-width="0.8"/>
<circle cx="884" cy="593.5" r="6.0" fill="#ADD1B2" stroke="#A80036" stroke-width="0.7"/>
<text x="884" y="596.6" font-size="8.6" font-weight="bold" text-anchor="middle" font-family="'DejaVu Sans Mono','Liberation Mono',monospace" fill="#000">C</text>
<text x="894.25" y="596.1" font-size="7.0" textLength="30.75" lengthAdjust="spacingAndGlyphs">Alphabet</text>
<text x="871.5" y="611.25" font-size="6.3" textLength="58.5" lengthAdjust="spacingAndGlyphs">char wildCardChar</text>
<rect x="956.8" y="578.55" width="68" height="51.5" fill="#000" opacity="0.5" filter="url(#sh)"/>
<rect x="954.5" y="576.25" width="68" height="51.5" fill="#FEFECE" stroke="#A80036" stroke-width="0.85"/>
<line x1="954.5" y1="595.25" x2="1022.5" y2="595.25" stroke="#A80036" stroke-width="0.8"/>
<line x1="954.5" y1="607.5" x2="1022.5" y2="607.5" stroke="#A80036" stroke-width="0.8"/>
<circle cx="963.25" cy="585.75" r="6.0" fill="#ADD1B2" stroke="#A80036" stroke-width="0.7"/>
<text x="963.25" y="588.85" font-size="8.6" font-weight="bold" text-anchor="middle" font-family="'DejaVu Sans Mono','Liberation Mono',monospace" fill="#000">C</text>
<text x="972" y="588.35" font-size="7.0" textLength="47.5" lengthAdjust="spacingAndGlyphs">WildCardPiece</text>
<text x="958" y="603.75" font-size="6.3" textLength="29.5" lengthAdjust="spacingAndGlyphs">char char</text>
<text x="958" y="616" font-size="6.3" textLength="44" lengthAdjust="spacingAndGlyphs">int getPoints()</text>
<text x="958" y="623.75" font-size="6.3" textLength="50.25" lengthAdjust="spacingAndGlyphs">String toString()</text>
<rect x="1093.55" y="583.8" width="52.5" height="42.5" fill="#000" opacity="0.5" filter="url(#sh)"/>
<rect x="1091.25" y="581.5" width="52.5" height="42.5" fill="#FEFECE" stroke="#A80036" stroke-width="0.85"/>
<line x1="1091.25" y1="600.25" x2="1143.75" y2="600.25" stroke="#A80036" stroke-width="0.8"/>
<line x1="1091.25" y1="605" x2="1143.75" y2="605" stroke="#A80036" stroke-width="0.8"/>
<circle cx="1106.75" cy="590.75" r="6.0" fill="#ADD1B2" stroke="#A80036" stroke-width="0.7"/>
<text x="1106.75" y="593.85" font-size="8.6" font-weight="bold" text-anchor="middle" font-family="'DejaVu Sans Mono','Liberation Mono',monospace" fill="#000">C</text>
<text x="1117.5" y="593.35" font-size="7.0" textLength="17" lengthAdjust="spacingAndGlyphs">Piece</text>
<text x="1094.75" y="613.25" font-size="6.3" textLength="43.5" lengthAdjust="spacingAndGlyphs">int getPoints()</text>
<text x="1094.75" y="621" font-size="6.3" textLength="45.25" lengthAdjust="spacingAndGlyphs">char getChar()</text>
<rect x="1181.05" y="575.3" width="101.25" height="58.75" fill="#000" opacity="0.5" filter="url(#sh)"/>
<rect x="1178.75" y="573" width="101.25" height="58.75" fill="#FEFECE" stroke="#A80036" stroke-width="0.85"/>
<line x1="1178.75" y1="592" x2="1280" y2="592" stroke="#A80036" stroke-width="0.8"/>
<line x1="1178.75" y1="604" x2="1280" y2="604" stroke="#A80036" stroke-width="0.8"/>
<circle cx="1207" cy="582.5" r="6.0" fill="#ADD1B2" stroke="#A80036" stroke-width="0.7"/>
<text x="1207" y="585.6" font-size="8.6" font-weight="bold" text-anchor="middle" font-family="'DejaVu Sans Mono','Liberation Mono',monospace" fill="#000">C</text>
<text x="1219.5" y="585.1" font-size="7.0" textLength="38" lengthAdjust="spacingAndGlyphs">BoardSetup</text>
<text x="1182.25" y="600.25" font-size="6.3" textLength="34.75" lengthAdjust="spacingAndGlyphs">String lines</text>
<text x="1182.25" y="612.5" font-size="6.3" textLength="42" lengthAdjust="spacingAndGlyphs">int getWidth()</text>
<text x="1182.25" y="620.25" font-size="6.3" textLength="45" lengthAdjust="spacingAndGlyphs">int getHeight()</text>
<text x="1182.25" y="628" font-size="6.3" textLength="93.5" lengthAdjust="spacingAndGlyphs">char getMultiple(EInt x, EInt y)</text>
<rect x="1303.05" y="586.3" width="102" height="36.25" fill="#000" opacity="0.5" filter="url(#sh)"/>
<rect x="1300.75" y="584" width="102" height="36.25" fill="#FEFECE" stroke="#A80036" stroke-width="0.85"/>
<line x1="1300.75" y1="603" x2="1402.75" y2="603" stroke="#A80036" stroke-width="0.8"/>
<line x1="1300.75" y1="607.75" x2="1402.75" y2="607.75" stroke="#A80036" stroke-width="0.8"/>
<circle cx="1342.5" cy="593.5" r="6.0" fill="#ADD1B2" stroke="#A80036" stroke-width="0.7"/>
<text x="1342.5" y="596.6" font-size="8.6" font-weight="bold" text-anchor="middle" font-family="'DejaVu Sans Mono','Liberation Mono',monospace" fill="#000">C</text>
<text x="1355" y="596.1" font-size="7.0" textLength="12.5" lengthAdjust="spacingAndGlyphs">Bag</text>
<text x="1304.5" y="616" font-size="6.3" textLength="93.75" lengthAdjust="spacingAndGlyphs">Piece pick(EInt n, Piece pieces)</text>
<rect x="1425.8" y="590.3" width="31.75" height="28.25" fill="#000" opacity="0.5" filter="url(#sh)"/>
<rect x="1423.5" y="588" width="31.75" height="28.25" fill="#FEFECE" stroke="#A80036" stroke-width="0.85"/>
<line x1="1423.5" y1="607" x2="1455.25" y2="607" stroke="#A80036" stroke-width="0.8"/>
<line x1="1423.5" y1="611.75" x2="1455.25" y2="611.75" stroke="#A80036" stroke-width="0.8"/>
<circle cx="1432" cy="597.5" r="6.0" fill="#ADD1B2" stroke="#A80036" stroke-width="0.7"/>
<text x="1432" y="600.6" font-size="8.6" font-weight="bold" text-anchor="middle" font-family="'DejaVu Sans Mono','Liberation Mono',monospace" fill="#000">C</text>
<text x="1440.5" y="600.1" font-size="7.0" textLength="12.5" lengthAdjust="spacingAndGlyphs">Box</text>
<rect x="991.8" y="693.8" width="38.5" height="50.75" fill="#000" opacity="0.5" filter="url(#sh)"/>
<rect x="989.5" y="691.5" width="38.5" height="50.75" fill="#FEFECE" stroke="#A80036" stroke-width="0.85"/>
<line x1="989.5" y1="710.5" x2="1028" y2="710.5" stroke="#A80036" stroke-width="0.8"/>
<line x1="989.5" y1="737.5" x2="1028" y2="737.5" stroke="#A80036" stroke-width="0.8"/>
<circle cx="998" cy="701.25" r="6.0" fill="#ADD1B2" stroke="#A80036" stroke-width="0.7"/>
<text x="998" y="704.35" font-size="8.6" font-weight="bold" text-anchor="middle" font-family="'DejaVu Sans Mono','Liberation Mono',monospace" fill="#000">C</text>
<text x="1006.5" y="703.85" font-size="7.0" textLength="19" lengthAdjust="spacingAndGlyphs">Letter</text>
<text x="993" y="719" font-size="6.3" textLength="29.5" lengthAdjust="spacingAndGlyphs">char char</text>
<text x="993" y="726.75" font-size="6.3" textLength="29" lengthAdjust="spacingAndGlyphs">int points</text>
<text x="993" y="734.5" font-size="6.3" textLength="27.75" lengthAdjust="spacingAndGlyphs">int count</text><text x="1160.5" y="125.5" font-size="7.2" textLength="30.75" lengthAdjust="spacingAndGlyphs">delegate</text>
<text x="945" y="235.5" font-size="7.2" textLength="44.25" lengthAdjust="spacingAndGlyphs">piecesMap *</text>
<text x="927" y="357" font-size="7.2" textLength="19.75" lengthAdjust="spacingAndGlyphs">value</text>
<text x="891.25" y="403.5" font-size="7.2" textLength="18.75" lengthAdjust="spacingAndGlyphs">piece</text>
<text x="1211.75" y="341.75" font-size="7.2" textLength="30.5" lengthAdjust="spacingAndGlyphs">delegate</text>
<text x="781.75" y="430" font-size="7.2" textLength="27.75" lengthAdjust="spacingAndGlyphs">words *</text>
<text x="817" y="471.75" font-size="7.2" textLength="21" lengthAdjust="spacingAndGlyphs">round</text>
<text x="1009.25" y="475.25" font-size="7.2" textLength="20.75" lengthAdjust="spacingAndGlyphs">board</text>
<text x="1012.5" y="475.25" font-size="7.2" textLength="22.5" lengthAdjust="spacingAndGlyphs">player</text>
<text x="710" y="566.25" font-size="7.2" textLength="49.25" lengthAdjust="spacingAndGlyphs">boardPieces *</text>
<text x="803.75" y="566.25" font-size="7.2" textLength="49.25" lengthAdjust="spacingAndGlyphs">boardPieces *</text>
<text x="1044.25" y="574" font-size="7.2" textLength="58.75" lengthAdjust="spacingAndGlyphs">removedPieces *</text>
<text x="1053.5" y="574" font-size="7.2" textLength="49.5" lengthAdjust="spacingAndGlyphs">playedPieces *</text>
<text x="1145" y="574" font-size="7.2" textLength="28.25" lengthAdjust="spacingAndGlyphs">pieces *</text>
<text x="955.5" y="689.75" font-size="7.2" textLength="29" lengthAdjust="spacingAndGlyphs">letters *</text>
<text x="1032.5" y="689.75" font-size="7.2" textLength="19.25" lengthAdjust="spacingAndGlyphs">letter</text></g>
</g></svg>
<svg class="ui" width="1473" height="748" viewBox="0 0 1473 748">
<!-- xcore file icon -->
<g>
 <rect x="3" y="11" width="7" height="7" fill="#a04cba"/>
 <rect x="4" y="12" width="2" height="2" fill="#c088d4"/><rect x="7.2" y="12" width="2" height="2" fill="#c088d4"/><rect x="4" y="15.2" width="2" height="2" fill="#c088d4"/>
 <rect x="6" y="10" width="1" height="8" fill="#5a1a78"/><rect x="2" y="14" width="8" height="0.9" fill="#5a1a78"/>
 <rect x="1" y="18" width="7.2" height="8" fill="#e23a4c"/>
 <path d="M2.6,19.8 L6.6,24.2 M6.6,19.8 L2.6,24.2" stroke="#fff" stroke-width="1.5"/>
 <path d="M8.4,15.3 H13.4 L16.7,18.6 V25.6 H8.4 Z" fill="#fbfbff" stroke="#b5a675" stroke-width="0.9"/>
 <path d="M13.2,15.3 L16.7,18.8 H13.2 Z" fill="#e4b658"/>
 <path d="M10.2,19.2 C12,21.2 13.4,21.2 15.2,19.2 M10.2,24 C12,22 13.4,22 15.2,24" stroke="#1f4a78" stroke-width="1.4" fill="none"/>
</g>
<!-- close X left tab -->
<path id="cx" d="M119.5,13.5 h2.25 l2.25,2.25 l2.25,-2.25 h2.25 v2.25 l-2.25,2.25 l2.25,2.25 v2.25 h-2.25 l-2.25,-2.25 l-2.25,2.25 h-2.25 v-2.25 l2.25,-2.25 l-2.25,-2.25 z" fill="#fff" stroke="#000" stroke-width="1" stroke-linejoin="round"/>
<path d="M730.5,13.5 h2.25 l2.25,2.25 l2.25,-2.25 h2.25 v2.25 l-2.25,2.25 l2.25,2.25 v2.25 h-2.25 l-2.25,-2.25 l-2.25,2.25 h-2.25 v-2.25 l2.25,-2.25 l-2.25,-2.25 z" fill="#fff" stroke="#000" stroke-width="1" stroke-linejoin="round"/>
<!-- PlantUML icon -->
<g>
 <path d="M657.4,25.3 H668.4 V12" fill="none" stroke="#d4d4d4" stroke-width="0.9"/>
 <circle cx="659.3" cy="23.3" r="0.5" fill="#c06070"/><circle cx="662.6" cy="23.3" r="0.5" fill="#c06070"/><circle cx="666.3" cy="23.3" r="0.5" fill="#c06070"/>
 <path d="M653,19.4 L654.6,21 L656,23 L654.3,22.8 Z M653,19 h2 v3.6 h-2z" fill="#0a78c8"/>
 <rect x="666.1" y="11.4" width="1.1" height="8" fill="#0a78c8"/>
 <rect x="666.1" y="10.9" width="1.6" height="1" fill="#b01838"/>
 <path d="M664.8,15.8 L668,19.4 L664.8,23 L661.6,19.4 Z" fill="#3a1060"/>
 <path d="M661,15.6 L664.2,19.1 L661,22.6 L657.8,19.1 Z" fill="#f0a820"/>
 <path d="M656.7,15.8 L660.2,19.5 L656.7,23.2 L653.2,19.5 Z" fill="#c0103c"/>
 <circle cx="656.6" cy="18.7" r="0.9" fill="#e46080"/>
</g>
<!-- toolbar -->
<g>
 <rect x="1309.5" y="4.5" width="21" height="21" fill="#d2d2d2" stroke="#b8b8b8" stroke-width="1"/>
 <rect x="1313" y="7" width="10" height="16" fill="#000"/>
 <ellipse cx="1318" cy="9.6" rx="3" ry="1.9" fill="#808080"/>
 <ellipse cx="1318" cy="14.8" rx="3" ry="1.9" fill="#808080"/>
 <ellipse cx="1318" cy="20.1" rx="3" ry="1.9" fill="#20f020"/>
 <rect x="1334" y="4" width="1" height="22" fill="#9a9a9a"/>
 <!-- zoom in -->
 <path d="M1348.5,15.2 L1352.8,19.4" stroke="#000" stroke-width="2.5" stroke-linecap="round"/>
 <path d="M1349.6,16.3 L1352.6,19.2" stroke="#c87830" stroke-width="1.2" stroke-linecap="round"/>
 <circle cx="1345.4" cy="12.1" r="4.3" fill="#e0e0f0" stroke="#222" stroke-width="1.1"/>
 <path d="M1343,12.1 h4.8 M1345.4,9.7 v4.8" stroke="#000" stroke-width="1.2"/>
 <!-- zoom out -->
 <path d="M1370.8,15.2 L1375.1,19.4" stroke="#000" stroke-width="2.5" stroke-linecap="round"/>
 <path d="M1371.9,16.3 L1374.9,19.2" stroke="#c87830" stroke-width="1.2" stroke-linecap="round"/>
 <circle cx="1367.7" cy="12.1" r="4.3" fill="#e0e0f0" stroke="#222" stroke-width="1.1"/>
 <path d="M1365.3,12.1 h4.8" stroke="#000" stroke-width="1.2"/>
 <!-- fit -->
 <rect x="1384.5" y="7.5" width="15" height="15" fill="#e8e8f4" stroke="#2828f0" stroke-width="1"/>
 <path d="M1384.5,9.5 h15" stroke="#2828f0" stroke-width="1"/>
 <rect x="1389.5" y="13.5" width="5" height="4" fill="none" stroke="#2828f0" stroke-width="1"/>
 <path d="M1386.5,14 v-2.5 h2.5 M1386.5,11.5 l2.5,2 M1397.5,14 v-2.5 h-2.5 M1397.5,11.5 l-2.5,2 M1386.5,17.5 v2.5 h2.5 M1386.5,20 l2.5,-2 M1397.5,17.5 v2.5 h-2.5 M1397.5,20 l-2.5,-2" stroke="#2828f0" stroke-width="0.9" fill="none"/>
 <!-- 100 -->
 <rect x="1406.5" y="7.5" width="15" height="15" fill="#e8e8f4" stroke="#2828f0" stroke-width="1"/>
 <text x="1414" y="18.3" font-size="9.4" text-anchor="middle" fill="#2828f0" font-family="'Liberation Sans',sans-serif" textLength="12.4" lengthAdjust="spacingAndGlyphs">100</text>
</g>
</svg>

</body></html>
